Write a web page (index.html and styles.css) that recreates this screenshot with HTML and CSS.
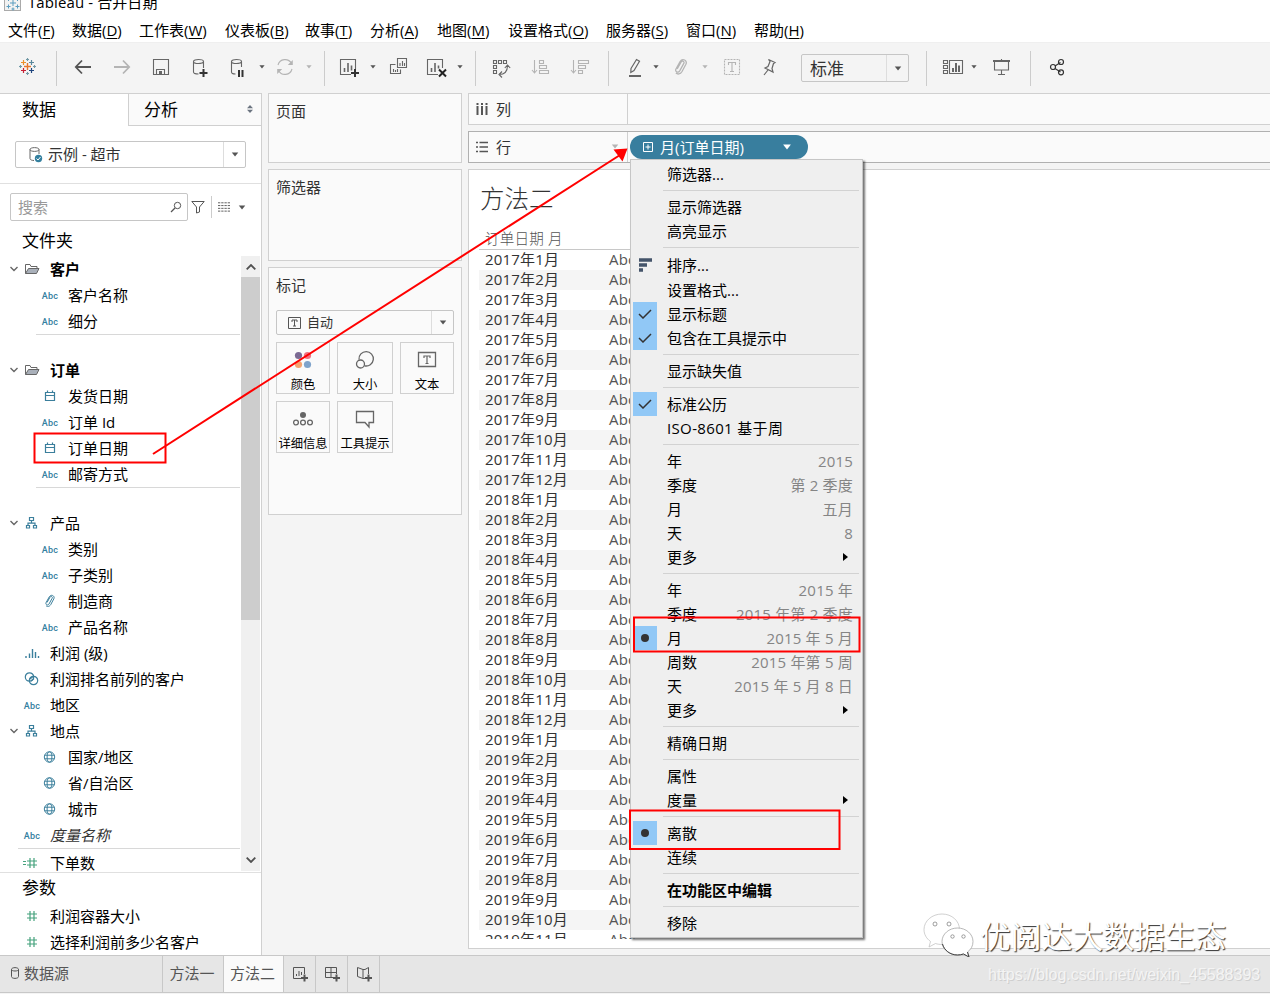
FILE: index.html
```html
<!DOCTYPE html>
<html lang="zh-CN">
<head>
    <meta charset="utf-8">
    <title>Tableau - 合并日期</title>
    <link rel="stylesheet" href="styles.css">
</head>

<body>

    <!-- shared icons -->
    <svg class="defs">
        <symbol id="caret" viewBox="0 0 6 4"><path d="M0.4 0.3H5.6L3 3.6z" fill="currentColor"/></symbol>
        <symbol id="chev" viewBox="0 0 22 20"><path d="M11.500 8l3.500 3.500L18.500 8" fill="none" stroke="#666" stroke-width="1.4"/></symbol>
        <symbol id="folder" viewBox="0 0 20 20"><path d="M3.500 14.500V5.500h4.500l1 2h6v2" fill="none" stroke="#666"/><path d="M3.500 14.500L6.500 9.500H17l-2.500 5z" fill="#a9b0ba" stroke="#666"/></symbol>
        <symbol id="cal" viewBox="0 0 20 20"><path d="M5.500 6.500h9v8h-9zM5.500 9.500h9M7.500 4.500v2M12.500 4.500v2" fill="none" stroke="#3b7f9c" stroke-width="1.200"/></symbol>
        <symbol id="tree" viewBox="0 0 20 20"><path d="M7.500 4.500h4v3h-4zM4.500 12.500h3v2.500h-3zM11.500 12.500h3v2.500h-3zM9.500 7.500v2.500M6 12.500V10.200h7v2.300" fill="none" stroke="#3b7f9c" stroke-width="1.200"/></symbol>
        <symbol id="clip" viewBox="0 0 20 20"><path d="M7 11.500L10 6.200c.9-1.600 3-.5 2.200 1L9 13c-1.200 2-3.900.6-2.900-1.500L9.300 5.800c1.800-3 6-1 4.500 2.100l-3 5.600c-1.400 2.400-3.500 2.300-4.800 1.200" fill="none" stroke="currentColor"/></symbol>
        <symbol id="globe" viewBox="0 0 20 20"><g fill="none" stroke="#3b7f9c"><circle cx="9.500" cy="10" r="5.200"/><ellipse cx="9.500" cy="10" rx="2.400" ry="5.200"/><path d="M5 8.200h9M5 11.800h9"/></g></symbol>
        <symbol id="hash" viewBox="0 0 20 20"><path d="M8 5v10M12 5v10M5 8h10M5 12h10" fill="none" stroke="#45a27d" stroke-width="1.200"/></symbol>
    </svg>

    <div class="titlebar">
        <svg class="appicon" width="18" height="18" viewBox="0 0 18 18">
            <rect x=".5" y=".5" width="16" height="16" fill="#f2f2f2" stroke="#aaa"/>
            <path d="M9 6v6M6 9h6M4.500 3v4M2.500 5h4M13.500 3v4M11.500 5h4M4.500 10.500v4M2.500 12.500h4M13.500 10.500v4M11.500 12.500h4M9 13.500v3M7.500 15h3" stroke="#5b9cbf"/>
        </svg>
        <span>Tableau - 合并日期</span>
    </div>

    <div class="menubar">
        <span>文件(<u>F</u>)</span>
        <span>数据(<u>D</u>)</span>
        <span>工作表(<u>W</u>)</span>
        <span>仪表板(<u>B</u>)</span>
        <span>故事(<u>T</u>)</span>
        <span>分析(<u>A</u>)</span>
        <span>地图(<u>M</u>)</span>
        <span>设置格式(<u>O</u>)</span>
        <span>服务器(<u>S</u>)</span>
        <span>窗口(<u>N</u>)</span>
        <span>帮助(<u>H</u>)</span>
    </div>

    <div class="toolbar">
        <svg class="tool" viewBox="0 0 20 20">
            <path d="M10.500 6v7M7 9.500h7" stroke="#e8762c" stroke-width="1.400"/>
            <path d="M6.500 3v5M4 5.500h5" stroke="#eb912b" stroke-width="1.200"/>
            <path d="M14.500 3v5M12 5.500h5" stroke="#59879b" stroke-width="1.200"/>
            <path d="M6.500 11v5M4 13.500h5" stroke="#c72035" stroke-width="1.200"/>
            <path d="M14.500 11v5M12 13.500h5" stroke="#1f457e" stroke-width="1.200"/>
            <path d="M10.500 1v3M9 2.500h3M10.500 15v3M9 16.500h3M3.500 8v3M2 9.500h3M17.500 8v3M16 9.500h3" stroke="#7199a6"/>
        </svg>
        <i class="sep"></i>
        <svg class="tool" viewBox="0 0 20 20"><path d="M18 10H3M9 3.500L2.800 10 9 16.500" stroke="#555" stroke-width="1.800"/></svg>
        <svg class="tool" viewBox="0 0 20 20"><path d="M2 10h15M11 3.500L17.200 10 11 16.500" stroke="#b4b4b4" stroke-width="1.800"/></svg>
        <svg class="tool" viewBox="0 0 20 20"><path d="M2.500 2.500h15v15h-15zM5.500 17.500v-5h8v5"/><path d="M8 14h3v3H8z" fill="#666" stroke="none"/></svg>
        <svg class="tool" viewBox="0 0 20 20"><path d="M13.500 11V4.500c0-2.700-10-2.700-10 0V15c0 1.500 3 2 5 2M3.500 4.500c0 2.700 10 2.700 10 0"/><path d="M13.500 12v8M9.500 16h8" stroke="#333" stroke-width="2"/></svg>
        <svg class="tool" viewBox="0 0 20 20"><path d="M13.500 10V4.500c0-2.700-10-2.700-10 0V15c0 1.500 2 2 4 2M3.500 4.500c0 2.700 10 2.700 10 0"/><path d="M11 13v7M14.500 13v7" stroke="#333" stroke-width="2"/></svg>
        <svg class="dd"><use href="#caret"/></svg>
        <svg class="tool dim" viewBox="0 0 20 20"><path d="M3 8a7.300 7.300 0 0 1 13.500-1.500M17 12a7.300 7.300 0 0 1-13.500 1.500"/><path d="M17.800 3v5h-5zM2.200 17v-5h5z" fill="#b4b4b4" stroke="none"/></svg>
        <svg class="dd dim"><use href="#caret"/></svg>
        <i class="sep"></i>
        <svg class="tool" viewBox="0 0 20 20"><path d="M12 17.500H1.500v-15h15V12"/><path d="M5.500 11v4M9 6v9M12.500 8.500v5" stroke-width="1.600"/><path d="M16 12v8M12 16h8" stroke="#333" stroke-width="2"/></svg>
        <svg class="dd"><use href="#caret"/></svg>
        <svg class="tool" viewBox="0 0 20 20"><path d="M8.500 1.500h9v9h-9zM6.500 7.500h-5v9h10v-4M4.500 12v3M6.500 13v2M8.500 12v3M11 6v3M13.500 4v5M15.500 6v3"/></svg>
        <svg class="tool" viewBox="0 0 20 20"><path d="M11 17.500H.5v-15h15V11"/><path d="M4.500 11v4M8 6v9M11.500 8.500v3" stroke-width="1.600"/><path d="M12 12.500l7 7M19 12.500l-7 7" stroke="#222" stroke-width="2"/></svg>
        <svg class="dd"><use href="#caret"/></svg>
        <i class="sep"></i>
        <svg class="tool" viewBox="0 0 20 20"><path d="M2.500 3.500h3v3h-3zM7.500 3.500h3v3h-3zM12.500 3.500h3v3h-3zM2.500 8.500h3v3h-3zM2.500 13.500h3v3h-3zM8 17.500c6 0 8.500-3 8.500-9M13.800 11l2.700-3 2.700 3M11 14.500l-3 3 3 3"/></svg>
        <svg class="tool dim" viewBox="0 0 20 20"><path d="M3.500 3v13M1 13l2.500 3L6 13M8.500 3.500h4v3h-4zM8.500 8.500h7v3h-7zM8.500 13.500h9v3h-9z"/></svg>
        <svg class="tool dim" viewBox="0 0 20 20"><path d="M3.500 3v13M1 13l2.500 3L6 13M8.500 3.500h10v3h-10zM8.500 8.500h7v3h-7zM8.500 13.500h4v3h-4z"/></svg>
        <i class="sep"></i>
        <svg class="tool" viewBox="0 0 20 20"><path d="M6 11.500L11.500 2.500l3 1.800L9 13.500l-3.200 2z" stroke-width="1.200"/><path d="M4 19h12" stroke-width="2"/></svg>
        <svg class="dd"><use href="#caret"/></svg>
        <svg class="clip-lg" viewBox="3 3 14 14"><use href="#clip" width="20" height="20"/></svg>
        <svg class="dd dim"><use href="#caret"/></svg>
        <svg class="tool dim" viewBox="0 0 20 20"><path d="M2.500 2.500h15v15h-15z" stroke-dasharray="2 1"/><path d="M6.500 8V5.500h7V8M10 5.500v9M8 14.500h4"/></svg>
        <svg class="tool" viewBox="0 0 20 20"><path d="M9.500 2.500l6.500 3-1.500 1-1.500 5 1 3.500-8-4 3-1.500 2-5zM9 13l-4 5" stroke-width="1.200"/></svg>
        <div class="combo fit"><span>标准</span><b><svg class="dd big"><use href="#caret"/></svg></b></div>
        <i class="sep"></i>
        <svg class="tool" viewBox="0 0 20 20"><path d="M.500 3.500h4v3h-4zM.500 8.500h4v3h-4zM.500 13.500h4v3h-4zM6.500 3.500h13v13h-13z"/><path d="M10 11v4M13 6v9M16 8.500v6.500" stroke-width="2"/></svg>
        <svg class="dd"><use href="#caret"/></svg>
        <svg class="tool" viewBox="0 0 20 20"><path d="M3.500 5v8h14V5M10.500 13v4M7 17.500h7M10.500 2v2"/><path d="M2 4h17" stroke-width="2"/></svg>
        <i class="sep"></i>
        <svg class="tool" viewBox="0 0 20 20"><path d="M8 9l5.500-3.500M8 11.500L13.500 15" stroke="#333"/><g stroke="#333" stroke-width="1.200"><circle cx="6" cy="10" r="2.500"/><circle cx="14" cy="5" r="2.500"/><circle cx="14" cy="15.300" r="2.500"/></g></svg>
    </div>

    <div class="main">

        <div class="sidebar">
            <div class="tabs">
                <div class="tab on">数据</div>
                <div class="tab">分析 <svg width="6" height="8" viewBox="0 0 6 8"><path d="M0 3.300h6L3 0zM0 4.700h6L3 8z" fill="#6b7480"/></svg></div>
            </div>
            <div class="source">
                <div class="combo">
                    <svg width="16" height="18" viewBox="0 0 16 18"><path d="M12 8V3.500c0-2.500-9-2.500-9 0v9c0 1.300 2 2 4 2M3 3.500c0 2.500 9 2.500 9 0" fill="none" stroke="#666"/><circle cx="11.500" cy="12.500" r="3.700" fill="#34809f"/><path d="M9.500 12.500l1.500 1.500 2.500-3" fill="none" stroke="#fff"/></svg>
                    <span>示例 - 超市</span>
                    <b><svg class="dd big"><use href="#caret"/></svg></b>
                </div>
            </div>
            <div class="search">
                <div class="searchbox">搜索 <svg width="12" height="12" viewBox="0 0 12 12"><path d="M5 7L1 11" stroke="#555" stroke-width="1.300"/><circle cx="7.500" cy="4.500" r="3.200" fill="none" stroke="#555"/></svg></div>
                <svg class="funnel" width="14" height="14" viewBox="0 0 14 14"><path d="M.8 1.500h12.400L8.500 7v5l-3 1V7z" fill="none" stroke="#555"/></svg>
                <svg class="list" width="13" height="11" viewBox="0 0 13 11"><path d="M0 1.500h13M0 4.500h13M0 7.500h13M0 10.500h13" stroke="#555" stroke-dasharray="2.500 1"/></svg>
                <svg class="dd big"><use href="#caret"/></svg>
            </div>
            <div class="heading">文件夹</div>

            <div class="treewrap">
                <div class="tree">
                    <div class="row bold"><svg class="ch"><use href="#chev"/></svg><svg class="ic"><use href="#folder"/></svg>客户</div>
                    <div class="row sub"><em>Abc</em>客户名称</div>
                    <div class="row sub"><em>Abc</em>细分</div>
                    <div class="line"></div>
                    <div class="row bold"><svg class="ch"><use href="#chev"/></svg><svg class="ic"><use href="#folder"/></svg>订单</div>
                    <div class="row sub"><svg class="ic"><use href="#cal"/></svg>发货日期</div>
                    <div class="row sub"><em>Abc</em>订单 Id</div>
                    <div class="row sub"><svg class="ic"><use href="#cal"/></svg>订单日期</div>
                    <div class="row sub"><em>Abc</em>邮寄方式</div>
                    <div class="line"></div>
                    <div class="row"><svg class="ch"><use href="#chev"/></svg><svg class="ic"><use href="#tree"/></svg>产品</div>
                    <div class="row sub"><em>Abc</em>类别</div>
                    <div class="row sub"><em>Abc</em>子类别</div>
                    <div class="row sub"><svg class="ic"><use href="#clip"/></svg>制造商</div>
                    <div class="row sub"><em>Abc</em>产品名称</div>
                    <div class="row top"><svg class="ic"><path d="M4 13v2M7.500 10.500v4.500M10.500 6v9M13.500 9v6M16.500 13v2" stroke="#3b7f9c" stroke-width="1.400"/></svg>利润 (级)</div>
                    <div class="row top"><svg class="ic"><g fill="none" stroke="#3b7f9c" stroke-width="1.200"><circle cx="7.500" cy="8" r="4.200"/><circle cx="11.500" cy="11.500" r="4.200"/><path d="M8 10l3-2.500M9 12l3-2.500"/></g></svg>利润排名前列的客户</div>
                    <div class="row top"><em>Abc</em>地区</div>
                    <div class="row"><svg class="ch"><use href="#chev"/></svg><svg class="ic"><use href="#tree"/></svg>地点</div>
                    <div class="row sub"><svg class="ic"><use href="#globe"/></svg>国家/地区</div>
                    <div class="row sub"><svg class="ic"><use href="#globe"/></svg>省/自治区</div>
                    <div class="row sub"><svg class="ic"><use href="#globe"/></svg>城市</div>
                    <div class="row top italic"><em>Abc</em><span>度量名称</span></div>
                    <div class="line last"></div>
                    <div class="row top"><svg class="ic"><path d="M1 8.500h3M1 11.500h3" stroke="#45a27d"/><use href="#hash" width="20" height="20"/></svg>下单数</div>
                </div>
                <div class="scroll">
                    <svg width="10" height="6" viewBox="0 0 10 6"><path d="M.7 5.300L5 1l4.300 4.300" fill="none" stroke="#505050" stroke-width="1.800"/></svg>
                    <div class="thumb"></div>
                    <svg width="10" height="6" viewBox="0 0 10 6"><path d="M.7.700L5 5 9.300.700" fill="none" stroke="#505050" stroke-width="1.800"/></svg>
                </div>
            </div>

            <div class="params">
                <div class="heading">参数</div>
                <div class="row top"><svg class="ic"><use href="#hash"/></svg>利润容器大小</div>
                <div class="row top"><svg class="ic"><use href="#hash"/></svg>选择利润前多少名客户</div>
            </div>
        </div>

        <div class="cards">
            <div class="card pages">页面</div>
            <div class="card filters">筛选器</div>
            <div class="card marks">
                标记
                <div class="combo small">
                    <svg width="14" height="12" viewBox="0 0 14 12"><path d="M.500.500h12v11H.500zM4 5V3h5v2M6.500 3v6M5 9h3" fill="none" stroke="#555"/></svg>
                    <span>自动</span>
                    <b><svg class="dd big"><use href="#caret"/></svg></b>
                </div>
                <div class="btns">
                    <div class="btn"><svg viewBox="0 0 20 20"><circle cx="5.500" cy="5.500" r="3.600" fill="#7b6a93"/><circle cx="14.500" cy="5.500" r="3.600" fill="#f0717f"/><circle cx="5.500" cy="14.500" r="3.600" fill="#f5a36f"/><circle cx="14.500" cy="14.500" r="3.600" fill="#7fa3cb"/></svg>颜色</div>
                    <div class="btn"><svg viewBox="0 0 20 20"><g fill="none" stroke="#666" stroke-width="1.300"><path d="M4 9.500a7.200 7.200 0 1 1 5.500 6.300"/><circle cx="5.500" cy="14" r="4"/></g></svg>大小</div>
                    <div class="btn"><svg viewBox="0 0 20 20"><path d="M1.500 2.500h17v14h-17z" fill="none" stroke="#666" stroke-width="1.300"/><path d="M7 8V6h6v2M10 6v7.500M8.500 13.500h3" fill="none" stroke="#666" stroke-width="1.200"/></svg>文本</div>
                    <div class="btn"><svg viewBox="0 0 20 20"><circle cx="10" cy="6" r="3" fill="#666"/><g fill="none" stroke="#666" stroke-width="1.300"><circle cx="3" cy="13.500" r="2.400"/><circle cx="10" cy="13.500" r="2.400"/><circle cx="17" cy="13.500" r="2.400"/></g></svg>详细信息</div>
                    <div class="btn"><svg viewBox="0 0 20 20"><path d="M1.500 2.500h17v11h-4.500v4.500l-4-4.500H1.500z" fill="none" stroke="#666" stroke-width="1.300"/></svg>工具提示</div>
                </div>
            </div>
        </div>

        <div class="view">
            <div class="shelf">
                <div class="label"><svg width="12" height="12" viewBox="0 0 12 12"><path d="M1.500 0v2M6 0v2M10.500 0v2M1.500 3v9M6 3v9M10.500 3v9" stroke="#555" stroke-width="2"/></svg>列</div>
            </div>
            <div class="shelf active">
                <div class="label"><svg width="12" height="12" viewBox="0 0 12 12"><path d="M0 1.500h2M0 6h2M0 10.500h2M3.500 1.500H12M3.500 6H12M3.500 10.500H12" stroke="#555" stroke-width="1.600"/></svg>行<svg class="dd big dim"><use href="#caret"/></svg></div>
                <div class="pill"><svg width="10" height="10" viewBox="0 0 10 10"><path d="M.500.500h9v9h-9zM2.500 5h5M5 2.500v5" fill="none" stroke="#fff"/></svg><span>月(订单日期)</span><svg class="dd"><use href="#caret"/></svg></div>
            </div>
            <div class="sheet">
                <div class="sheet-title">方法二</div>
                <div class="table-head">订单日期 月</div>
                <div class="table">
                    <div><span>2017年1月</span>Abc</div>
                    <div><span>2017年2月</span>Abc</div>
                    <div><span>2017年3月</span>Abc</div>
                    <div><span>2017年4月</span>Abc</div>
                    <div><span>2017年5月</span>Abc</div>
                    <div><span>2017年6月</span>Abc</div>
                    <div><span>2017年7月</span>Abc</div>
                    <div><span>2017年8月</span>Abc</div>
                    <div><span>2017年9月</span>Abc</div>
                    <div><span>2017年10月</span>Abc</div>
                    <div><span>2017年11月</span>Abc</div>
                    <div><span>2017年12月</span>Abc</div>
                    <div><span>2018年1月</span>Abc</div>
                    <div><span>2018年2月</span>Abc</div>
                    <div><span>2018年3月</span>Abc</div>
                    <div><span>2018年4月</span>Abc</div>
                    <div><span>2018年5月</span>Abc</div>
                    <div><span>2018年6月</span>Abc</div>
                    <div><span>2018年7月</span>Abc</div>
                    <div><span>2018年8月</span>Abc</div>
                    <div><span>2018年9月</span>Abc</div>
                    <div><span>2018年10月</span>Abc</div>
                    <div><span>2018年11月</span>Abc</div>
                    <div><span>2018年12月</span>Abc</div>
                    <div><span>2019年1月</span>Abc</div>
                    <div><span>2019年2月</span>Abc</div>
                    <div><span>2019年3月</span>Abc</div>
                    <div><span>2019年4月</span>Abc</div>
                    <div><span>2019年5月</span>Abc</div>
                    <div><span>2019年6月</span>Abc</div>
                    <div><span>2019年7月</span>Abc</div>
                    <div><span>2019年8月</span>Abc</div>
                    <div><span>2019年9月</span>Abc</div>
                    <div><span>2019年10月</span>Abc</div>
                    <div><span>2019年11月</span>Abc</div>
                </div>
            </div>
        </div>
    </div>

    <div class="bottom">
        <div class="bt ds"><svg width="8" height="12" viewBox="0 0 8 12"><path d="M.500 2.500c0-2.500 7-2.500 7 0v7c0 2.500-7 2.500-7 0zM.500 2.500c0 2 7 2 7 0" fill="none" stroke="#555"/></svg>数据源</div>
        <div class="bt">方法一</div>
        <div class="bt on">方法二</div>
        <div class="bt add"><svg viewBox="0 0 16 16"><path d="M9 12.500H1.500v-11h11V8M4.500 8v2M7 5v5M9.500 6v3"/><path d="M12.500 8.500v7M9 12h7" stroke-width="2"/></svg></div>
        <div class="bt add"><svg viewBox="0 0 16 16"><path d="M9 11.500H1.500v-10h11V8M1.500 6.500h11M7 1.500v10"/><path d="M12.500 8.500v7M9 12h7" stroke-width="2"/></svg></div>
        <div class="bt add"><svg viewBox="0 0 16 16"><path d="M7 3.500L1.500 1.500v9L7 12.500zM7 3.500h2l3.500-2V8M7 12.500h2"/><path d="M12.500 8.500v7M9 12h7" stroke-width="2"/></svg></div>
    </div>

    <!-- pill context menu -->
    <div class="menu">
        <div class="item">筛选器...</div>
        <hr>
        <div class="item">显示筛选器</div>
        <div class="item">高亮显示</div>
        <hr>
        <div class="item tall"><i><svg width="13" height="14" viewBox="0 0 13 14"><path d="M0 2h13M0 7h8M0 12h4" stroke="#44546a" stroke-width="3.600"/></svg></i>排序...</div>
        <div class="item">设置格式...</div>
        <div class="item"><i class="on"><svg width="14" height="10" viewBox="0 0 14 10"><path d="M1 5l4 4 8-8" fill="none" stroke="#333" stroke-width="1.500"/></svg></i>显示标题</div>
        <div class="item"><i class="on"><svg width="14" height="10" viewBox="0 0 14 10"><path d="M1 5l4 4 8-8" fill="none" stroke="#333" stroke-width="1.500"/></svg></i>包含在工具提示中</div>
        <hr>
        <div class="item">显示缺失值</div>
        <hr>
        <div class="item"><i class="on"><svg width="14" height="10" viewBox="0 0 14 10"><path d="M1 5l4 4 8-8" fill="none" stroke="#333" stroke-width="1.500"/></svg></i>标准公历</div>
        <div class="item iso">ISO-8601 基于周</div>
        <hr>
        <div class="item">年<span>2015</span></div>
        <div class="item">季度<span>第 2 季度</span></div>
        <div class="item">月<span>五月</span></div>
        <div class="item">天<span>8</span></div>
        <div class="item more">更多</div>
        <hr>
        <div class="item">年<span>2015 年</span></div>
        <div class="item">季度<span>2015 年第 2 季度</span></div>
        <div class="item"><i class="on dot"></i>月<span>2015 年 5 月</span></div>
        <div class="item">周数<span>2015 年第 5 周</span></div>
        <div class="item">天<span>2015 年 5 月 8 日</span></div>
        <div class="item more">更多</div>
        <hr>
        <div class="item">精确日期</div>
        <hr>
        <div class="item">属性</div>
        <div class="item more">度量</div>
        <hr>
        <div class="item"><i class="on dot"></i>离散</div>
        <div class="item">连续</div>
        <hr>
        <div class="item bold">在功能区中编辑</div>
        <hr>
        <div class="item">移除</div>
    </div>

    <!-- red marks over the page -->
    <svg class="notes" width="1270" height="994" viewBox="0 0 1270 994">
        <g fill="none" stroke="#f00" stroke-width="2">
            <rect x="34.500" y="433.500" width="131" height="29"/>
            <rect x="634" y="617.500" width="225.500" height="34"/>
            <rect x="630" y="810.500" width="209.500" height="38.500"/>
            <path d="M153 454L620 155"/>
        </g>
        <path d="M613.500 149.500L627.500 148.500 622.500 161.500z" fill="#f00"/>
    </svg>

    <div class="watermark">
        <svg width="52" height="44" viewBox="0 0 52 44">
            <g fill="#fff" stroke="#bbb" stroke-width=".7">
                <path d="M19 1C9 1 1 8 1 16.500c0 5 2.500 9 6.500 12L6 34l6.500-3.500c8 3 24-1 24-14C36.500 8 29 1 19 1z"/>
                <path d="M34.500 15C26 15 19 21 19 28.500S26 42 34.500 42c2 0 4-.4 6-1l5.500 3-1.500-5c3.500-2.500 5.500-6 5.500-10.500C50 21 43 15 34.500 15z" stroke="#999"/>
                <path d="M19.500 31c1.500 6 7.500 11 15 11 2 0 4-.4 6-1l5.500 3-1.500-5" fill="none" stroke="#444" stroke-width="1"/>
                <g stroke="#777"><circle cx="12" cy="11" r="2"/><circle cx="26" cy="11" r="2"/><circle cx="29.500" cy="23.500" r="1.700"/><circle cx="40.500" cy="23.500" r="1.700"/></g>
            </g>
        </svg>
        <span>优阅达大数据生态</span>
    </div>
    <div class="url">https://blog.csdn.net/weixin_45588393</div>

</body>
</html>
```
FILE: styles.css
```css
* {
    box-sizing: border-box;
}

body {
    margin: 0;
    width: 1270px;
    height: 994px;
    overflow: hidden;
    position: relative;
    display: flex;
    flex-direction: column;
    background: #f4f4f4;
    color: #000;
    font-family: "Open Sans", "Noto Sans CJK SC", sans-serif;
    font-size: 15px;
    line-height: 20px;
    white-space: nowrap;
}

svg {
    display: block;
    flex: none;
}

.defs {
    width: 0;
    height: 0;
    position: absolute;
}

.titlebar {
    height: 17px;
    flex: none;
    background: #fff;
    display: flex;
    align-items: flex-end;
    overflow: hidden;
    padding-left: 4px;
    gap: 6px;
}

    .titlebar span {
        margin-bottom: 5px;
        letter-spacing: .1px;
    }

.appicon {
    margin-bottom: 5px;
}

.menubar {
    height: 25px;
    flex: none;
    background: #fff;
    padding: 3px 0 0 8px;
    display: grid;
    grid-template-columns: 64px 67px 86px 80px 65px 67px 71px 98px 80px 68px 80px;
}

    .menubar u {
        text-underline-offset: 2px;
    }

/* toolbar */
.toolbar {
    height: 51px;
    flex: none;
    padding: 0 0 2px 17px;
    border-top: 1px solid #efefef;
    display: grid;
    grid-template-columns: 39px 17px 39px 39px 39px 38px 31px 16px 31px 18px 15px 31px 19px 38px 30px 18px 16px 40px 39px 38px 17px 28px 18px 31px 20px 37px 42px 125px 17px 28px 20px 39px 17px 20px;
    align-items: center;
}

.tool {
    width: 20px;
    height: 20px;
    overflow: visible;
    fill: none;
    stroke: #666;
    stroke-width: 1.1;
}

.tool.dim {
    stroke: #b4b4b4;
}

.clip-lg {
    width: 20px;
    height: 18px;
    color: #b4b4b4;
}

.dd {
    width: 6px;
    height: 4px;
    color: #555;
}

.dd.big {
    width: 8px;
    height: 5px;
}

.dd.dim {
    color: #b4b4b4;
}

.sep {
    width: 1px;
    height: 35px;
    margin-top: 3px;
    background: #ccc;
}

.combo {
    height: 27px;
    border: 1px solid #c6c6c6;
    border-radius: 2px;
    display: flex;
    align-items: center;
    color: #333;
}

    .combo span {
        margin-top: -1px;
    }

    .combo b {
        width: 22px;
        align-self: stretch;
        margin-left: auto;
        border-left: 1px solid #ddd;
        display: flex;
        align-items: center;
        justify-content: center;
    }

.combo.fit {
    width: 108px;
    height: 28px;
    padding-left: 8px;
    font-size: 17px;
    margin-top: 2px;
}

    .combo.fit span {
        margin-top: 1px;
    }

/* data pane */
.main {
    height: 862px;
    flex: none;
    display: flex;
}

.sidebar {
    width: 262px;
    background: #fff;
    border-right: 1px solid #d0d0d0;
    border-top: 1px solid #d0d0d0;
    display: flex;
    flex-direction: column;
}

.tabs {
    height: 32px;
    display: flex;
    font-size: 17px;
}

.tab {
    flex: 1;
    padding: 6px 8px 0 15px;
    background: #fafafa;
    border-left: 1px solid #d0d0d0;
    border-bottom: 1px solid #d0d0d0;
    display: flex;
    justify-content: space-between;
}

    .tab svg {
        margin-top: 5px;
    }

.tab.on {
    flex: none;
    width: 128px;
    padding-left: 22px;
    background: #fff;
    border: 0;
}

.source {
    height: 58px;
    padding: 15px 15px 0;
    border-bottom: 1px solid #e0e0e0;
}

    .source .combo {
        padding-left: 11px;
        gap: 5px;
    }

.search {
    height: 46px;
    padding: 9px 0 0 10px;
    display: flex;
}

.searchbox {
    width: 178px;
    height: 28px;
    border: 1px solid #c6c6c6;
    border-radius: 2px;
    padding: 3px 5px 0 7px;
    color: #999;
    display: flex;
    justify-content: space-between;
}

    .searchbox svg {
        margin-top: 4px;
    }

.funnel {
    margin: 7px 6px 0 3px;
}

.list {
    margin: 3px 8px 0 0;
    padding: 5px 0 6px 6px;
    width: 19px;
    height: 22px;
    border-left: 1px solid #ccc;
}

.search .dd {
    margin-top: 12px;
}

.heading {
    height: 26px;
    padding: 1px 0 0 22px;
    font-size: 17px;
}

.treewrap {
    height: 615px;
    display: flex;
}

.tree {
    flex: 1;
    overflow: hidden;
}

.row {
    height: 26px;
    display: flex;
    align-items: center;
}

.row.sub {
    padding-left: 40px;
}

.row.top {
    padding-left: 22px;
}

.bold {
    font-weight: bold;
}

.italic span {
    font-style: italic;
    color: #333;
}

.ch {
    width: 22px;
    height: 20px;
    margin-left: -1px;
    margin-right: 1px;
}

.ic {
    width: 20px;
    height: 20px;
    margin-right: 8px;
    color: #3b7f9c;
}

.row em {
    width: 20px;
    margin: 2px 8px 0 0;
    text-align: center;
    font: 500 9px/20px Roboto, sans-serif;
    letter-spacing: .3px;
    color: #34809f;
}

.line {
    height: 23px;
    margin: 0 1px 0 36px;
    border-top: 1px solid #d8d8d8;
}

.line.last {
    height: 2px;
    margin-left: 18px;
}

.scroll {
    width: 19px;
    margin-right: 1px;
    padding: 8px 0;
    background: #f0f0f0;
    display: flex;
    flex-direction: column;
    align-items: center;
}

.thumb {
    width: 19px;
    height: 343px;
    margin: 7px 0 auto;
    background: #cdcdcd;
}

.params {
    margin-top: 1px;
    border-top: 1px solid #e0e0e0;
    flex: 1;
}

    .params .heading {
        height: 30px;
        padding-top: 5px;
    }

/* pages, filters, marks */
.cards {
    width: 194px;
    margin-left: 6px;
    display: flex;
    flex-direction: column;
    gap: 6px;
}

.card {
    border: 1px solid #d0d0d0;
    background: #fafafa;
    padding: 7px;
    color: #333;
}

.pages {
    height: 70px;
}

.filters {
    height: 92px;
}

.marks {
    height: 248px;
}

.combo.small {
    height: 25px;
    margin-top: 15px;
    padding-left: 11px;
    gap: 5px;
    font-size: 13px;
}

.btns {
    margin-top: 7px;
    display: grid;
    grid-template-columns: 54px 56px 54px;
    gap: 7px;
}

.btn {
    height: 52px;
    border: 1px solid #d0d0d0;
    padding-top: 7px;
    display: flex;
    flex-direction: column;
    align-items: center;
    gap: 5px;
    font-size: 12.3px;
    color: #000;
}

    .btn svg {
        width: 20px;
        height: 20px;
    }

/* shelves and sheet */
.view {
    flex: 1;
    margin-left: 6px;
}

.shelf {
    height: 32px;
    margin-bottom: 6px;
    border: 1px solid #d0d0d0;
    border-right: 0;
    background: #fafafa;
    color: #333;
    display: flex;
    align-items: center;
}

.shelf.active {
    border-color: #b0b0b0;
}

.label {
    width: 159px;
    height: 30px;
    padding: 0 0 1px 7px;
    border-right: 1px solid #d0d0d0;
    display: flex;
    align-items: center;
    gap: 8px;
}

    .label .dd {
        margin-left: auto;
        margin-right: 8px;
    }

.pill {
    width: 178px;
    height: 24px;
    margin-left: 2px;
    padding: 0 16px 0 13px;
    border-radius: 12px;
    background: #387e9e;
    color: #fff;
    display: flex;
    align-items: center;
    gap: 7px;
}

    .pill .dd {
        width: 10px;
        height: 6px;
        margin-left: auto;
        color: #fff;
    }

.sheet {
    height: 780px;
    border: 1px solid #d0d0d0;
    border-right: 0;
    background: #fff;
    padding: 13px 0 0 10px;
}

.sheet-title {
    height: 47px;
    padding-left: 1px;
    font-size: 24.500px;
    font-weight: 300;
    line-height: 32px;
    color: #333;
}

.table-head {
    width: 180px;
    height: 20px;
    padding-left: 6px;
    line-height: 17px;
    font-size: 14.600px;
    font-weight: 300;
    letter-spacing: .15px;
    border-bottom: 1px solid #c8c8c8;
    color: #555;
}

.table {
    width: 180px;
    height: 689px;
    overflow: hidden;
    letter-spacing: .2px;
    color: #555;
}

    .table div {
        height: 20px;
        padding-left: 6px;
        line-height: 18px;
        display: flex;
    }

    .table div:nth-child(even) {
        background: #f5f5f5;
    }

    .table span {
        width: 124px;
        color: #333;
    }

/* worksheet tabs */
.bottom {
    height: 38px;
    flex: none;
    background: #e6e6e6;
    border-top: 1px solid #c8c8c8;
    border-bottom: 1px solid #c8c8c8;
    display: flex;
}

.bt {
    width: 60px;
    padding: 0 2px 2px 0;
    border-right: 1px solid #c8c8c8;
    display: flex;
    align-items: center;
    justify-content: center;
    color: #555;
}

    .bt:nth-child(2) {
        width: 61px;
    }

.bt.ds {
    width: 163px;
    padding-left: 11px;
    justify-content: flex-start;
    gap: 5px;
}

.bt.on {
    background: #fafafa;
}

.bt.add {
    width: 32px;
    padding: 0;
}

    .bt.add svg {
        width: 16px;
        height: 16px;
        fill: none;
        stroke: #555;
    }

/* context menu */
.menu {
    position: absolute;
    left: 630px;
    top: 159px;
    width: 233px;
    height: 779px;
    padding: 2px;
    background: #efefef;
    border: 1px solid #c6c6c6;
    box-shadow: 2px 2px 2px rgba(0, 0, 0, .55);
}

    .menu hr {
        height: 1px;
        margin: 4px 1px 4px 30px;
        border: 0;
        background: #d2d2d2;
    }

.item {
    height: 24px;
    padding: 0 7px 0 34px;
    display: flex;
    align-items: center;
    justify-content: space-between;
    line-height: 24px;
}

.item.tall {
    height: 26px;
}

.item.iso {
    letter-spacing: .35px;
}

    .item span {
        margin-left: auto;
        color: #858585;
        letter-spacing: .2px;
    }

    .item i {
        width: 24px;
        height: 24px;
        margin: 0 10px 0 -34px;
        display: flex;
        align-items: center;
        justify-content: center;
    }

    .item:has(i) {
        justify-content: flex-start;
    }

    .item i.on {
        background: #91c8f6;
    }

    .item i.dot::after {
        content: "";
        width: 8px;
        height: 8px;
        border-radius: 50%;
        background: #333;
    }

.item.more::after {
    content: "";
    margin-right: 5px;
    border: 4px solid transparent;
    border-left: 5px solid #000;
    border-right: 0;
}

.notes {
    position: absolute;
    left: 0;
    top: 0;
}

.watermark {
    position: absolute;
    left: 923px;
    top: 913px;
    display: flex;
    gap: 5px;
    font-size: 30.800px;
    line-height: 46px;
    color: #fff;
    text-shadow: 1px 1px 1px #333;
}

.url {
    position: absolute;
    left: 988px;
    top: 965px;
    font: 16px/20px "Liberation Sans", sans-serif;
    color: #f4f4f4;
    text-shadow: 1px 1px 0 #cfcfcf;
}
```
